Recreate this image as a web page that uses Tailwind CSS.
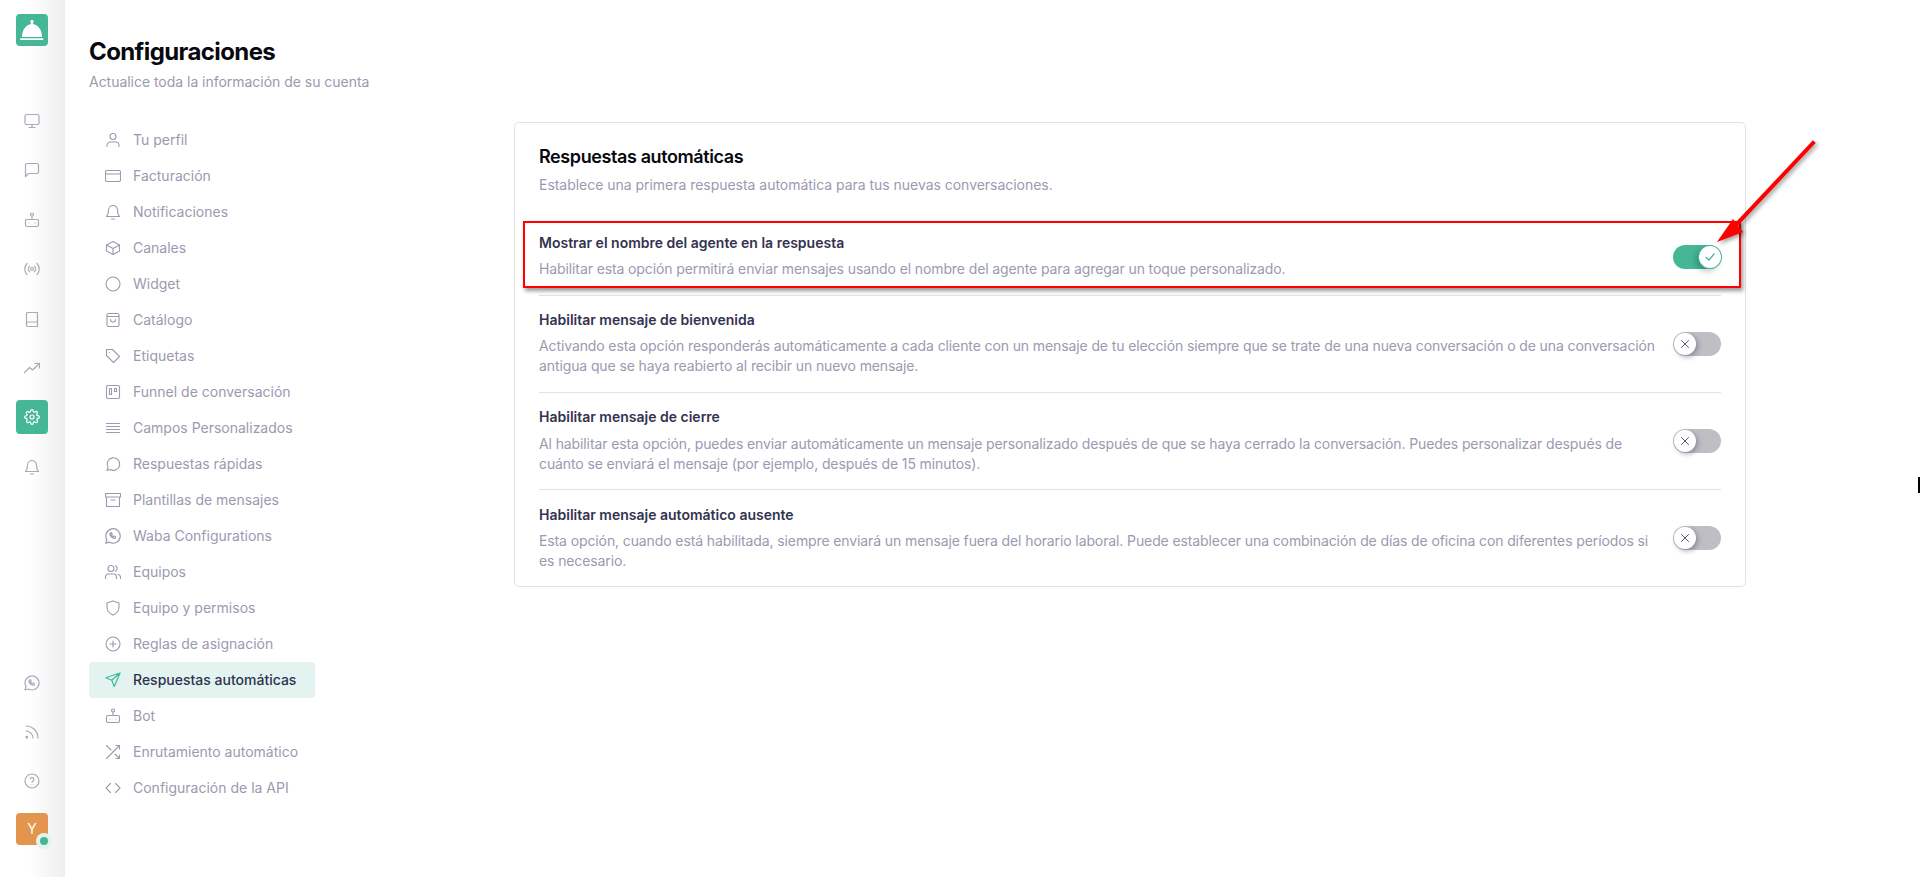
<!DOCTYPE html>
<html lang="es">
<head>
<meta charset="UTF-8">
<meta name="viewport" content="width=device-width, initial-scale=1.0">
<title>Configuraciones</title>
<script src="https://cdn.jsdelivr.net/npm/@tailwindcss/browser@4"></script>
</head>
<body class="bg-white h-[877px] overflow-hidden font-['Inter',sans-serif] relative">
<div class="flex h-[877px]">
  <!-- sidebar -->
  <aside class="w-[65px] shrink-0 h-full flex flex-col justify-between bg-linear-to-r from-white from-45% to-[#eeeef0] pl-4 pr-[17px] pt-[14px] pb-8 text-[#a9a9b8]">
    <div class="flex flex-col">
      <div class="w-8 h-8 rounded-[4px] bg-[#45b797] mb-[58px]">
        <svg class="w-8 h-8" viewBox="0 0 32 32" fill="#fff"><circle cx="16" cy="7.5" r="1.7"/><rect x="15" y="8" width="2" height="3"/><path d="M6 23 C6 15 11 10 16 10 C21 10 26 15 26 23 Z"/><rect x="4" y="24.2" width="23.5" height="1.8" rx=".9"/></svg>
      </div>
      <div class="flex flex-col gap-[15.4px]">
        <a class="h-[34px] flex items-center justify-center"><svg class="w-4 h-4" viewBox="0 0 16 16" fill="none" stroke="currentColor" stroke-width="1.2" stroke-linecap="round" stroke-linejoin="round"><rect x="1" y="1.5" width="14" height="10" rx="1.5"/><path d="M8 11.5v3M5 14.5h6"/></svg></a>
        <a class="h-[34px] flex items-center justify-center"><svg class="w-4 h-4" viewBox="0 0 16 16" fill="none" stroke="currentColor" stroke-width="1.2" stroke-linecap="round" stroke-linejoin="round"><path d="M1.5 14.5V3a1.5 1.5 0 0 1 1.5-1.5h10A1.5 1.5 0 0 1 14.5 3v7a1.5 1.5 0 0 1-1.5 1.5H4.5z"/></svg></a>
        <a class="h-[34px] flex items-center justify-center"><svg class="w-4 h-4" viewBox="0 0 16 16" fill="none" stroke="currentColor" stroke-width="1.2" stroke-linecap="round" stroke-linejoin="round"><circle cx="8" cy="2.5" r="1.5"/><path d="M8 4v3.5"/><rect x="1.5" y="7.5" width="13" height="7" rx="1.5"/><path d="M5 11h.01M11 11h.01"/></svg></a>
        <a class="h-[34px] flex items-center justify-center"><svg class="w-4 h-4" viewBox="0 0 16 16" fill="none" stroke="currentColor" stroke-width="1.2" stroke-linecap="round" stroke-linejoin="round"><circle cx="8" cy="8" r="1.5"/><path d="M5.5 5.2a4 4 0 0 0 0 5.6M10.5 5.2a4 4 0 0 1 0 5.6M3 2.5a8 8 0 0 0 0 11M13 2.5a8 8 0 0 1 0 11"/></svg></a>
        <a class="h-[34px] flex items-center justify-center"><svg class="w-4 h-4" viewBox="0 0 16 16" fill="none" stroke="currentColor" stroke-width="1.2" stroke-linecap="round" stroke-linejoin="round"><path d="M2.5 12.5V2.5a1.5 1.5 0 0 1 1.5-1h9.5v14H4a1.5 1.5 0 0 1-1.5-1.5v-1.5A1.5 1.5 0 0 1 4 11h9.5"/></svg></a>
        <a class="h-[34px] flex items-center justify-center"><svg class="w-4 h-4" viewBox="0 0 16 16" fill="none" stroke="currentColor" stroke-width="1.2" stroke-linecap="round" stroke-linejoin="round"><path d="M.5 12.5 5.5 7.5l3 2.5L15.5 3.5M11 3.5h4.5V8"/></svg></a>
        <a class="h-[34px] rounded-[4px] bg-[#45b797] flex items-center justify-center text-white"><svg class="w-4 h-4" viewBox="0 0 24 24" fill="none" stroke="currentColor" stroke-width="1.8" stroke-linecap="round" stroke-linejoin="round"><circle cx="12" cy="12" r="3"/><path d="M19.4 15a1.65 1.65 0 0 0 .33 1.82l.06.06a2 2 0 1 1-2.83 2.83l-.06-.06a1.65 1.65 0 0 0-2.82 1.17V21a2 2 0 0 1-4 0v-.09a1.65 1.65 0 0 0-2.88-1.11l-.06.06a2 2 0 1 1-2.83-2.83l.06-.06a1.65 1.65 0 0 0-1.17-2.82H3a2 2 0 0 1 0-4h.09A1.65 1.65 0 0 0 4.2 7.27l-.06-.06a2 2 0 1 1 2.83-2.83l.06.06A1.65 1.65 0 0 0 9.85 3.27V3a2 2 0 0 1 4 0v.09a1.65 1.65 0 0 0 2.82 1.17l.06-.06a2 2 0 1 1 2.83 2.83l-.06.06A1.65 1.65 0 0 0 20.91 10H21a2 2 0 0 1 0 4h-.09a1.65 1.65 0 0 0-1.51 1z"/></svg></a>
        <a class="h-[34px] flex items-center justify-center"><svg class="w-4 h-4" viewBox="0 0 16 16" fill="none" stroke="currentColor" stroke-width="1.2" stroke-linecap="round" stroke-linejoin="round"><path d="M12.5 6a4.5 4.5 0 0 0-9 0c0 4-1.5 6-2 6.5h13c-.5-.5-2-2.5-2-6.5M6.5 15h3"/></svg></a>
      </div>
    </div>
    <div class="flex flex-col gap-[15px]">
      <a class="h-[34px] flex items-center justify-center"><svg class="w-4 h-4" viewBox="0 0 16 16" fill="none" stroke="currentColor" stroke-width="1.2" stroke-linecap="round" stroke-linejoin="round"><path d="M1 15l1-3.5A7 7 0 1 1 4.5 14z"/><path d="M5.5 4.8c-.8.8-.6 2.4 1 4s3.2 1.9 4 1l-.2-1.3-1.5-.5-.7.7c-.6-.2-1.5-1.1-1.7-1.7l.7-.7-.5-1.5z"/></svg></a>
      <a class="h-[34px] flex items-center justify-center"><svg class="w-4 h-4" viewBox="0 0 16 16" fill="none" stroke="currentColor" stroke-width="1.2" stroke-linecap="round" stroke-linejoin="round"><path d="M2 7a7 7 0 0 1 7 7M2 2a12 12 0 0 1 12 12"/><circle cx="2.8" cy="13.2" r=".8" fill="currentColor"/></svg></a>
      <a class="h-[34px] flex items-center justify-center"><svg class="w-4 h-4" viewBox="0 0 16 16" fill="none" stroke="currentColor" stroke-width="1.2" stroke-linecap="round" stroke-linejoin="round"><circle cx="8" cy="8" r="7"/><path d="M6 6a2 2 0 0 1 3.9.6c0 1.3-1.9 1.7-1.9 2.7M8 11.5h.01"/></svg></a>
      <div class="relative w-8 h-8 rounded-[4px] bg-[#e3944d] flex items-center justify-center text-white text-sm">Y
        <span class="absolute left-5 top-5 w-4 h-4 rounded-full bg-[#e3f3ef] flex items-center justify-center"><span class="w-2 h-2 rounded-full bg-[#45b797]"></span></span>
      </div>
    </div>
  </aside>

  <main class="flex-1 pl-6 pt-9">
    <h1 class="text-2xl leading-8 font-bold tracking-[-0.6px] text-[#08080f]">Configuraciones</h1>
    <p class="mt-1 text-sm leading-5 tracking-[-0.03px] text-[#9a9ab0]">Actualice toda la información de su cuenta</p>

    <div class="flex items-start mt-[30px]">
      <!-- settings nav -->
      <nav class="w-[226px] shrink-0 text-sm text-[#9a9ab0]">
        <a class="h-9 flex items-center gap-[12px] pl-4"><svg class="w-4 h-4 shrink-0" viewBox="0 0 16 16" fill="none" stroke="currentColor" stroke-width="1.1" stroke-linecap="round" stroke-linejoin="round"><circle cx="8" cy="4.5" r="3"/><path d="M2 14.5v-1a3.5 3.5 0 0 1 3.5-3.5h5a3.5 3.5 0 0 1 3.5 3.5v1"/></svg>Tu perfil</a>
        <a class="h-9 flex items-center gap-[12px] pl-4"><svg class="w-4 h-4 shrink-0" viewBox="0 0 16 16" fill="none" stroke="currentColor" stroke-width="1.1" stroke-linecap="round" stroke-linejoin="round"><rect x=".5" y="2.5" width="15" height="11" rx="1.5"/><path d="M.5 6h15"/></svg>Facturación</a>
        <a class="h-9 flex items-center gap-[12px] pl-4"><svg class="w-4 h-4 shrink-0" viewBox="0 0 16 16" fill="none" stroke="currentColor" stroke-width="1.1" stroke-linecap="round" stroke-linejoin="round"><path d="M12.5 6a4.5 4.5 0 0 0-9 0c0 4-1.5 6-2 6.5h13c-.5-.5-2-2.5-2-6.5M6.5 15h3"/></svg>Notificaciones</a>
        <a class="h-9 flex items-center gap-[12px] pl-4"><svg class="w-4 h-4 shrink-0" viewBox="0 0 16 16" fill="none" stroke="currentColor" stroke-width="1.1" stroke-linecap="round" stroke-linejoin="round"><path d="M14.5 11V5L8 1.5 1.5 5v6L8 14.5z"/><path d="M1.5 5 8 8.5 14.5 5M8 8.5v6"/></svg>Canales</a>
        <a class="h-9 flex items-center gap-[12px] pl-4"><svg class="w-4 h-4 shrink-0" viewBox="0 0 16 16" fill="none" stroke="currentColor" stroke-width="1.1"><circle cx="8" cy="8" r="7"/></svg>Widget</a>
        <a class="h-9 flex items-center gap-[12px] pl-4"><svg class="w-4 h-4 shrink-0" viewBox="0 0 16 16" fill="none" stroke="currentColor" stroke-width="1.1" stroke-linecap="round" stroke-linejoin="round"><rect x="2" y="1.5" width="12" height="13" rx="1.5"/><path d="M2 4.5h12M5.5 7.5a2.5 2.5 0 0 0 5 0"/></svg>Catálogo</a>
        <a class="h-9 flex items-center gap-[12px] pl-4"><svg class="w-4 h-4 shrink-0" viewBox="0 0 16 16" fill="none" stroke="currentColor" stroke-width="1.1" stroke-linecap="round" stroke-linejoin="round"><path d="M1.5 1.5h6l7 7-6 6-7-7z"/><path d="M4.5 4.5h.01"/></svg>Etiquetas</a>
        <a class="h-9 flex items-center gap-[12px] pl-4"><svg class="w-4 h-4 shrink-0" viewBox="0 0 16 16" fill="none" stroke="currentColor" stroke-width="1.1" stroke-linecap="round" stroke-linejoin="round"><rect x="1.5" y="1.5" width="13" height="13" rx="1.5"/><path d="M4.5 4.5h2v6h-2zM9.5 4.5h2v3h-2z"/></svg>Funnel de conversación</a>
        <a class="h-9 flex items-center gap-[12px] pl-4"><svg class="w-4 h-4 shrink-0" viewBox="0 0 16 16" fill="none" stroke="currentColor" stroke-width="1.1" stroke-linecap="round"><path d="M1.5 3.5h13M1.5 6.5h13M1.5 9.5h13M1.5 12.5h13"/></svg>Campos Personalizados</a>
        <a class="h-9 flex items-center gap-[12px] pl-4"><svg class="w-4 h-4 shrink-0" viewBox="0 0 16 16" fill="none" stroke="currentColor" stroke-width="1.1" stroke-linecap="round" stroke-linejoin="round"><path d="M2 14.5l1-3.3A6.3 6.3 0 1 1 5.3 13.5z"/></svg>Respuestas rápidas</a>
        <a class="h-9 flex items-center gap-[12px] pl-4"><svg class="w-4 h-4 shrink-0" viewBox="0 0 16 16" fill="none" stroke="currentColor" stroke-width="1.1" stroke-linecap="round" stroke-linejoin="round"><path d="M.5 1.5h15v3.500H.5zM1.5 5v9.500h13V5M6 8h4"/></svg>Plantillas de mensajes</a>
        <a class="h-9 flex items-center gap-[12px] pl-4"><svg class="w-4 h-4 shrink-0" viewBox="0 0 16 16" fill="none" stroke="currentColor" stroke-width="1.2" stroke-linecap="round" stroke-linejoin="round"><path d="M.8 15.2l1-3.7A7.2 7.2 0 1 1 4.5 14.2z"/><path d="M5.5 4.8c-.8.8-.6 2.4 1 4s3.2 1.9 4 1l-.2-1.3-1.5-.5-.7.7c-.6-.2-1.5-1.1-1.7-1.7l.7-.7-.5-1.5z"/></svg>Waba Configurations</a>
        <a class="h-9 flex items-center gap-[12px] pl-4"><svg class="w-4 h-4 shrink-0" viewBox="0 0 16 16" fill="none" stroke="currentColor" stroke-width="1.1" stroke-linecap="round" stroke-linejoin="round"><circle cx="6" cy="4.5" r="3"/><path d="M.5 14.5V13a3 3 0 0 1 3-3h5a3 3 0 0 1 3 3v1.5M10.5 1.8a3 3 0 0 1 0 5.4M13 10.2a3 3 0 0 1 2.5 2.8v1.5"/></svg>Equipos</a>
        <a class="h-9 flex items-center gap-[12px] pl-4"><svg class="w-4 h-4 shrink-0" viewBox="0 0 16 16" fill="none" stroke="currentColor" stroke-width="1.1" stroke-linecap="round" stroke-linejoin="round"><path d="M8 15s6-2.5 6-7.5V3L8 1 2 3v4.5C2 12.5 8 15 8 15z"/></svg>Equipo y permisos</a>
        <a class="h-9 flex items-center gap-[12px] pl-4"><svg class="w-4 h-4 shrink-0" viewBox="0 0 16 16" fill="none" stroke="currentColor" stroke-width="1.1" stroke-linecap="round"><circle cx="8" cy="8" r="7"/><path d="M8 5v6M5 8h6"/></svg>Reglas de asignación</a>
        <a class="h-9 flex items-center gap-[12px] pl-4 rounded-[4px] bg-[#e3f3ef] text-[#2f3150] font-medium"><svg class="w-4 h-4 shrink-0 text-[#45b797]" viewBox="0 0 16 16" fill="none" stroke="currentColor" stroke-width="1.2" stroke-linecap="round" stroke-linejoin="round"><path d="M15 1 .8 5.8l6 2.4 2.4 6.3zM15 1 6.8 8.2"/></svg>Respuestas automáticas</a>
        <a class="h-9 flex items-center gap-[12px] pl-4"><svg class="w-4 h-4 shrink-0" viewBox="0 0 16 16" fill="none" stroke="currentColor" stroke-width="1.1" stroke-linecap="round" stroke-linejoin="round"><circle cx="8" cy="2.5" r="1.5"/><path d="M8 4v3.5"/><rect x="1.5" y="7.5" width="13" height="7" rx="1.5"/><path d="M5 11h.01M11 11h.01"/></svg>Bot</a>
        <a class="h-9 flex items-center gap-[12px] pl-4"><svg class="w-4 h-4 shrink-0" viewBox="0 0 16 16" fill="none" stroke="currentColor" stroke-width="1.1" stroke-linecap="round" stroke-linejoin="round"><path d="M11 1.5h3.5V5M1.5 14.5l13-13M14.5 11v3.5H11M10 10l4.5 4.5M1.5 1.5 6 6"/></svg>Enrutamiento automático</a>
        <a class="h-9 flex items-center gap-[12px] pl-4"><svg class="w-4 h-4 shrink-0" viewBox="0 0 16 16" fill="none" stroke="currentColor" stroke-width="1.1" stroke-linecap="round" stroke-linejoin="round"><path d="M5.5 3.5 1 8l4.5 4.5M10.5 3.5 15 8l-4.5 4.5"/></svg>Configuración de la API</a>
      </nav>

      <!-- card -->
      <section class="ml-[199px] w-[1232px] h-[465px] rounded-[5px] border border-[#e2e2e6] pl-6 pr-6 pt-5">
        <h2 class="text-lg leading-7 font-semibold tracking-[-0.4px] text-[#08080f]">Respuestas automáticas</h2>
        <p class="mt-1 text-sm leading-5 tracking-[-0.03px] text-[#9a9ab0]">Establece una primera respuesta automática para tus nuevas conversaciones.</p>

        <div class="mt-6 border-b border-[#e2e2e6] flex items-center justify-between">
          <div class="w-[1122px] pt-[14px] pb-4">
            <h3 class="text-sm leading-5 font-semibold text-[#33334f]">Mostrar el nombre del agente en la respuesta</h3>
            <p class="mt-[6px] text-sm leading-5 tracking-[-0.11px] text-[#9a9ab0]">Habilitar esta opción permitirá enviar mensajes usando el nombre del agente para agregar un toque personalizado.</p>
          </div>
          <div class="relative w-12 h-6 rounded-full bg-[#45b797]">
            <span class="absolute right-0 top-px w-[22px] h-[22px] rounded-full bg-white ring-1 ring-[#45b797] shadow-[-3px_3px_6px_rgba(0,0,0,0.25)] flex items-center justify-center"><svg class="w-[10px] h-[10px] text-[#45b797]" viewBox="0 0 10 10" fill="none" stroke="currentColor" stroke-width="1.3" stroke-linecap="round" stroke-linejoin="round"><path d="M1 5.5 4 8l5-6"/></svg></span>
          </div>
        </div>

        <div class="border-b border-[#e2e2e6] flex items-center justify-between">
          <div class="w-[1122px] pt-[14px] pb-4">
            <h3 class="text-sm leading-5 font-semibold text-[#33334f]">Habilitar mensaje de bienvenida</h3>
            <p class="mt-[6px] text-sm leading-5 tracking-[-0.11px] text-[#9a9ab0]">Activando esta opción responderás automáticamente a cada cliente con un mensaje de tu elección siempre que se trate de una nueva conversación o de una conversación antigua que se haya reabierto al recibir un nuevo mensaje.</p>
          </div>
          <div class="relative w-12 h-6 rounded-full bg-[#bfbec5]">
            <span class="absolute left-px top-px w-[22px] h-[22px] rounded-full bg-white shadow-[2px_2px_5px_rgba(80,75,110,0.45)] flex items-center justify-center"><svg class="w-[8px] h-[8px] text-[#55556e]" viewBox="0 0 8 8" fill="none" stroke="currentColor" stroke-width="1" stroke-linecap="round"><path d="M.5.5l7 7M7.5.5l-7 7"/></svg></span>
          </div>
        </div>

        <div class="border-b border-[#e2e2e6] flex items-center justify-between">
          <div class="w-[1122px] pt-[14px] pb-[15px]">
            <h3 class="text-sm leading-5 font-semibold text-[#33334f]">Habilitar mensaje de cierre</h3>
            <p class="mt-[7px] text-sm leading-5 tracking-[-0.11px] text-[#9a9ab0]">Al habilitar esta opción, puedes enviar automáticamente un mensaje personalizado después de que se haya cerrado la conversación. Puedes personalizar después de cuánto se enviará el mensaje (por ejemplo, después de 15 minutos).</p>
          </div>
          <div class="relative w-12 h-6 rounded-full bg-[#bfbec5]">
            <span class="absolute left-px top-px w-[22px] h-[22px] rounded-full bg-white shadow-[2px_2px_5px_rgba(80,75,110,0.45)] flex items-center justify-center"><svg class="w-[8px] h-[8px] text-[#55556e]" viewBox="0 0 8 8" fill="none" stroke="currentColor" stroke-width="1" stroke-linecap="round"><path d="M.5.5l7 7M7.5.5l-7 7"/></svg></span>
          </div>
        </div>

        <div class="flex items-center justify-between">
          <div class="w-[1122px] pt-[15px] pb-[15px]">
            <h3 class="text-sm leading-5 font-semibold text-[#33334f]">Habilitar mensaje automático ausente</h3>
            <p class="mt-[6px] text-sm leading-5 tracking-[-0.11px] text-[#9a9ab0]">Esta opción, cuando está habilitada, siempre enviará un mensaje fuera del horario laboral. Puede establecer una combinación de días de oficina con diferentes períodos si es necesario.</p>
          </div>
          <div class="relative w-12 h-6 rounded-full bg-[#bfbec5]">
            <span class="absolute left-px top-px w-[22px] h-[22px] rounded-full bg-white shadow-[2px_2px_5px_rgba(80,75,110,0.45)] flex items-center justify-center"><svg class="w-[8px] h-[8px] text-[#55556e]" viewBox="0 0 8 8" fill="none" stroke="currentColor" stroke-width="1" stroke-linecap="round"><path d="M.5.5l7 7M7.5.5l-7 7"/></svg></span>
          </div>
        </div>
      </section>
    </div>
  </main>
</div>

<!-- annotation drawn over the screenshot -->
<div class="absolute left-[523px] top-[221px] w-[1218px] h-[67px] border-2 border-[#ff0000] shadow-[2px_3px_4px_rgba(0,0,0,0.4)]"></div>
<svg class="absolute left-[1700px] top-[130px] w-[130px] h-[125px] drop-shadow-[2px_2px_2px_rgba(0,0,0,0.4)]" viewBox="1700 130 130 125" fill="#ff0000"><path d="M1813 143 1737 224" stroke="#ff0000" stroke-width="4" stroke-linecap="square"/><path d="M1717 242 1733 219 1743 232z"/></svg>
<div class="absolute left-[1918px] top-[477px] w-[2px] h-4 bg-black"></div>
</body>
</html>
